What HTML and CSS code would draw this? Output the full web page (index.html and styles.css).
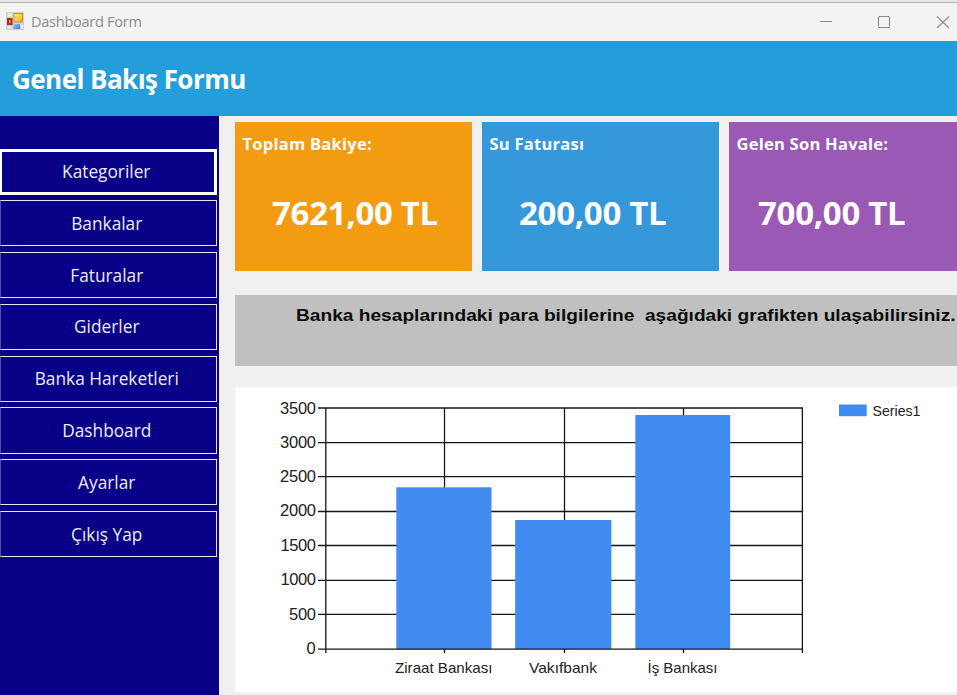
FILE: index.html
```html
<!DOCTYPE html>
<html lang="tr">
<head>
<meta charset="utf-8">
<title>Dashboard Form</title>
<link rel="stylesheet" href="styles.css">
</head>
<body>
<div class="window">
  <div class="titlebar">
    <svg class="app-icon" width="18" height="18" viewBox="0 0 18 18">
      <defs>
        <linearGradient id="gold" x1="0" y1="0" x2="1" y2="1"><stop offset="0" stop-color="#ffec8a"/><stop offset="1" stop-color="#eab010"/></linearGradient>
        <linearGradient id="sky" x1="0" y1="0" x2="1" y2="1"><stop offset="0" stop-color="#9cc4fb"/><stop offset="1" stop-color="#3a78de"/></linearGradient>
      </defs>
      <rect width="18" height="18" fill="#cfcfcf"/>
      <path d="M1.500 1.500h4v3h-4zM1.500 14.500h4v2h-4zM15 12.500h2v4h-2z" fill="#f2f2f2"/>
      <rect x="1" y="6" width="5.500" height="7" fill="#b42a20"/>
      <rect x="3" y="8" width="1.500" height="3" fill="#e99a90"/>
      <rect x="8" y="1.500" width="8.500" height="8.500" fill="url(#gold)" stroke="#c79a1c"/>
      <rect x="7.500" y="12" width="6.500" height="5" fill="url(#sky)"/>
    </svg>
    <span class="titlebar-text">Dashboard Form</span>
    <svg class="controls" width="140" height="20" viewBox="0 0 140 20" fill="none">
      <path d="M3 9.500H15" stroke="#8c8c8c"/>
      <rect x="61.500" y="4.500" width="11" height="11" rx="1" stroke="#8c8c8c" stroke-width="1.100"/>
      <path d="M120 4.500L132 16M132 4.500L120 16" stroke="#8c8c8c" stroke-width="1.100"/>
    </svg>
  </div>
  <header class="header"><h1>Genel Bakış Formu</h1></header>
  <div class="body">
    <nav class="sidebar">
      <button class="nav focused">Kategoriler</button>
      <button class="nav">Bankalar</button>
      <button class="nav">Faturalar</button>
      <button class="nav">Giderler</button>
      <button class="nav">Banka Hareketleri</button>
      <button class="nav">Dashboard</button>
      <button class="nav">Ayarlar</button>
      <button class="nav">Çıkış Yap</button>
    </nav>
    <main class="content">
      <div class="cards">
        <section class="card orange"><h2>Toplam Bakiye:</h2><p>7621,00 TL</p></section>
        <section class="card blue"><h2>Su Faturası</h2><p>200,00 TL</p></section>
        <section class="card purple"><h2>Gelen Son Havale:</h2><p>700,00 TL</p></section>
      </div>
      <div class="banner"><span>Banka hesaplarındaki para bilgilerine&nbsp; aşağıdaki grafikten ulaşabilirsiniz.</span></div>
      <svg class="chart" width="722" height="305" viewBox="235 387 722 305">
        <g class="grid">
          <path d="M318 408H803M318 442.700H803M318 476.700H803M318 511.500H803M318 545.500H803M318 580.400H803M318 614.400H803"/>
          <path d="M444.500 408V653M564.500 408V653M683.500 408V653M802.400 408V653M325.800 408V653"/>
        </g>
        <g class="bars">
          <rect x="396.300" y="487.300" width="95.200" height="162"/>
          <rect x="515.200" y="520" width="96.200" height="129"/>
          <rect x="635.300" y="415" width="94.900" height="234"/>
          <rect x="839" y="404.500" width="27.700" height="11.700"/>
        </g>
        <path class="axis" d="M318 649.200H803"/>
        <g class="ylabels">
          <text x="280" y="413.500" textLength="36">3500</text>
          <text x="280" y="447.500" textLength="36">3000</text>
          <text x="280" y="482.300" textLength="36">2500</text>
          <text x="280" y="516.300" textLength="36">2000</text>
          <text x="280.500" y="551" textLength="35.500">1500</text>
          <text x="280.500" y="585" textLength="35.500">1000</text>
          <text x="289" y="619.700" textLength="27">500</text>
          <text x="306.500" y="653.700">0</text>
        </g>
        <g class="xlabels">
          <text x="395" y="672.500" textLength="97.500" lengthAdjust="spacingAndGlyphs">Ziraat Bankası</text>
          <text x="529" y="672.500" textLength="68" lengthAdjust="spacingAndGlyphs">Vakıfbank</text>
          <text x="647.500" y="672.500" textLength="70" lengthAdjust="spacingAndGlyphs">İş Bankası</text>
          <text x="872.500" y="416" textLength="48" lengthAdjust="spacingAndGlyphs">Series1</text>
        </g>
      </svg>
    </main>
  </div>
</div>
</body>
</html>
```
FILE: styles.css
```css
* { box-sizing: border-box; }
body { margin: 0; overflow: hidden; background: #f0f0f0; font-family: "Open Sans", sans-serif; }
h1, h2, p { margin: 0; }
.window { width: 957px; height: 695px; display: flex; flex-direction: column; overflow: hidden; border-top: 2px solid #e8e8e8; }
.titlebar { height: 39px; flex: none; display: flex; align-items: center; padding-left: 6px; background: #f3f3f3; border-top: 1px solid #b4b4b4; }
.app-icon { margin-top: -2px; }
.titlebar-text { margin: -2px 0 0 7px; font: 14.5px "Open Sans", sans-serif; letter-spacing: -0.25px; color: #8c8c8c; }
.controls { margin-left: auto; }
.header { height: 75px; flex: none; background: #249edb; display: flex; align-items: center; padding: 1px 0 0 12px; }
.header h1 { color: #fff; font-size: 26px; line-height: 32px; font-weight: 700; letter-spacing: -0.55px; white-space: nowrap; }
.body { flex: 1; display: flex; min-height: 0; }
.sidebar { width: 219px; flex: none; background: #080086; padding-top: 32.500px; display: flex; flex-direction: column; gap: 5.600px; }
.nav { width: 216.500px; height: 46.200px; flex: none; margin: 0; padding: 0 3px 0 0; background: transparent; border: 1px solid #e4e4f4; border-left-color: #5550aa; color: #ececf6; font: 17.300px "Open Sans", sans-serif; }
.nav.focused { border: 3px solid #fff; border-left-width: 2px; }
.content { flex: 1; min-width: 0; padding: 6px 0 0 16px; display: flex; flex-direction: column; }
.cards { display: flex; gap: 10.500px; height: 149px; flex: none; }
.card { width: 236.500px; flex: none; padding: 12px 7.500px; color: #fff; }
.card h2 { font-size: 16.500px; line-height: 20px; font-weight: 700; letter-spacing: 0.25px; white-space: nowrap; }
.card p { margin-top: 37px; font-size: 33px; line-height: 44px; font-weight: 700; letter-spacing: -0.3px; white-space: nowrap; }
.orange { background: #f39c12; }
.blue { background: #3498db; }
.purple { background: #9b59b6; }
.orange p { padding-left: 29.500px; }
.blue p { padding-left: 29.500px; }
.purple p { padding-left: 21.500px; }
.banner { height: 71px; margin-top: 24px; flex: none; background: #c0c0c0; padding: 9px 0 0 61px; }
.banner span { display: inline-block; font: 700 17px/20px "Liberation Sans", sans-serif; white-space: nowrap; color: #0c0c0c; transform: scaleX(1.126); transform-origin: 0 0; }
.chart { display: block; flex: none; margin-top: 21px; background: #fff; }
.grid path, .axis { stroke: #151515; stroke-width: 1.300; fill: none; }
.bars rect { fill: #418cf0; }
.ylabels text { font: 16.500px "Liberation Sans", sans-serif; fill: #222; }
.xlabels text { font: 14.500px "Liberation Sans", sans-serif; fill: #222; }
```
